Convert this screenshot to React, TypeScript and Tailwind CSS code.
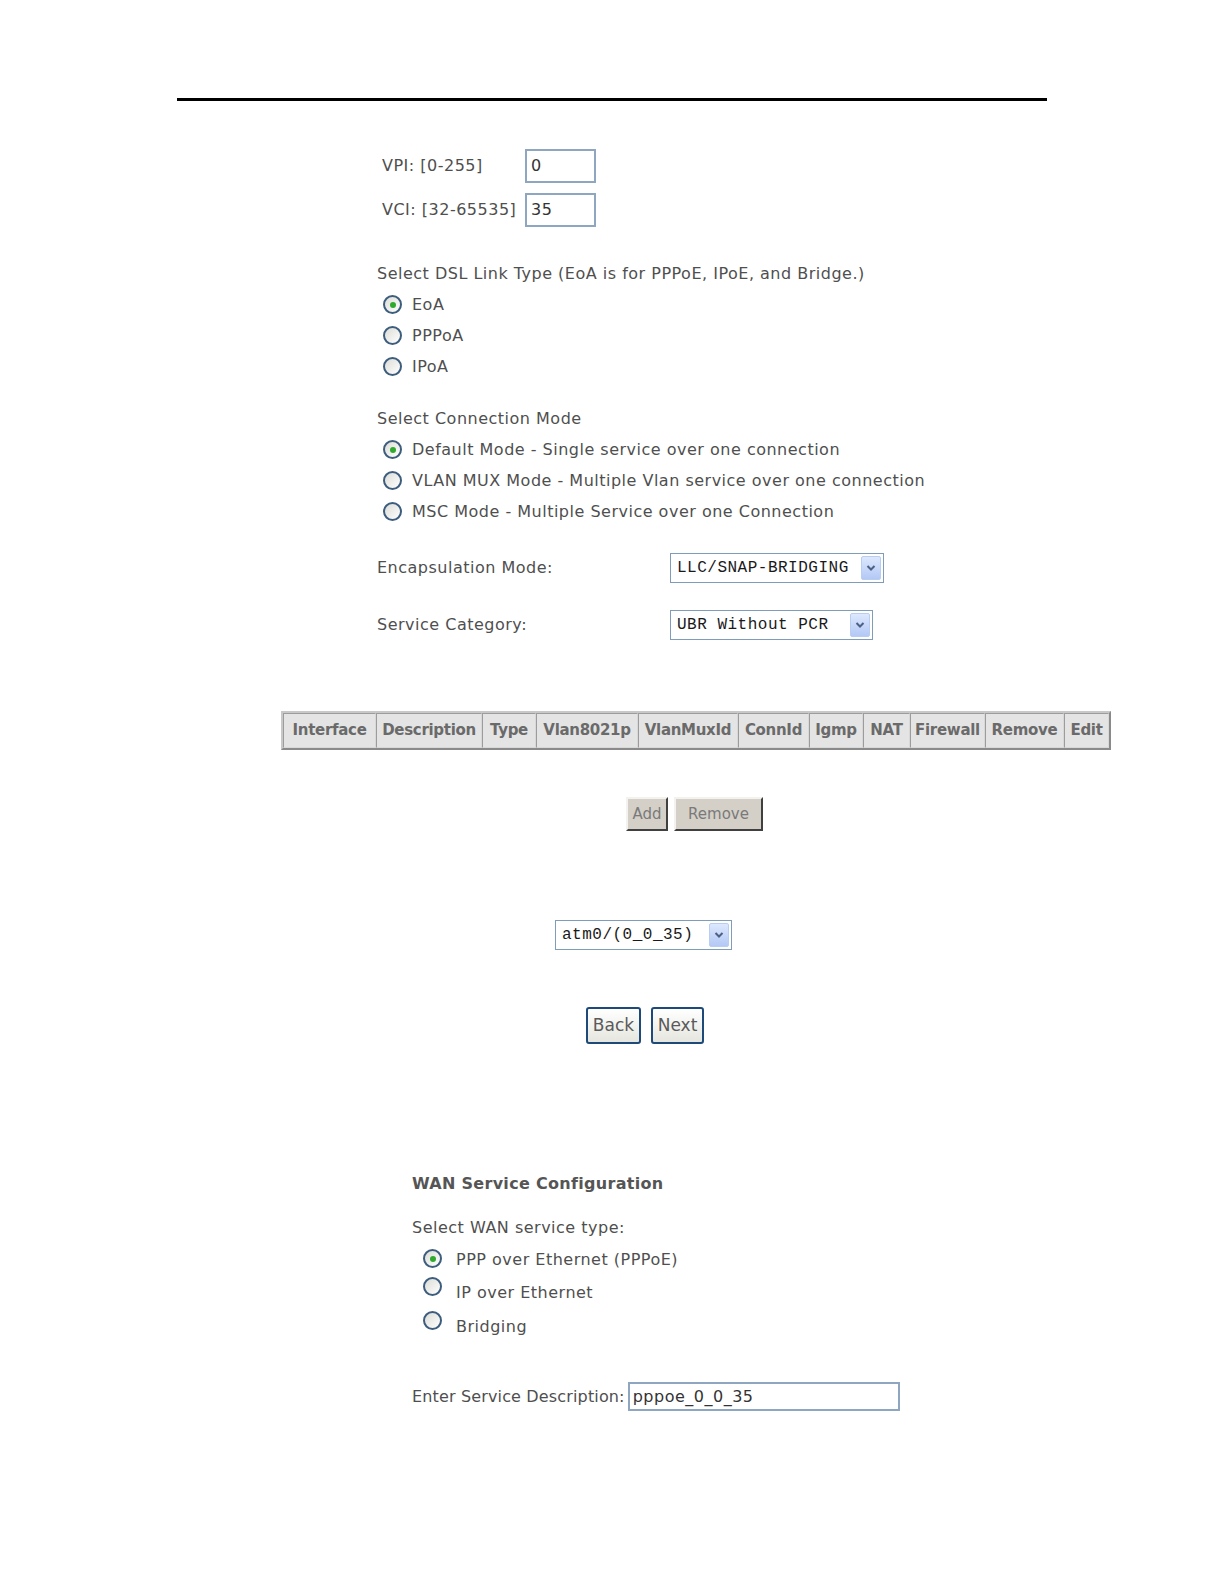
import React from 'react';

const font = "font-['DejaVu_Sans',Verdana,sans-serif]";

const Radio: React.FC<{ checked?: boolean }> = ({ checked }) => (
  <span className="inline-flex items-center justify-center w-[19px] h-[19px] rounded-full border-2 border-[#3d5d7e] bg-gradient-to-br from-[#dcdcd7] to-white shrink-0">
    {checked && <span className="w-[6px] h-[6px] rounded-full bg-[#2faa2f]" />}
  </span>
);

const RadioRow: React.FC<{ checked?: boolean; label: string }> = ({ checked, label }) => (
  <div className="flex items-center h-[31px] pl-[6px] gap-[10px]">
    <Radio checked={checked} />
    <span>{label}</span>
  </div>
);

const SelectBox: React.FC<{ value: string; width: string }> = ({ value, width }) => (
  <div className={`flex items-center justify-between h-[30px] ${width} border border-[#7f9db9] bg-white pl-[6px] pr-[2px]`}>
    <span className="font-['Liberation_Mono',monospace] text-[16px] text-[#1a1a1a] tracking-[0.5px]">{value}</span>
    <span className="flex items-center justify-center w-[20px] h-[24px] rounded-[2px] border border-[#b9cdf3] bg-gradient-to-b from-[#dde8fd] to-[#b3c8f5]">
      <svg width="10" height="8" viewBox="0 0 10 8">
        <path d="M1.5 2 L5 5.5 L8.5 2" fill="none" stroke="#4d6185" strokeWidth="2" />
      </svg>
    </span>
  </div>
);

const columns = [
  { name: 'Interface', w: 'w-[93px]' },
  { name: 'Description', w: 'w-[106px]' },
  { name: 'Type', w: 'w-[54px]' },
  { name: 'Vlan8021p', w: 'w-[102px]' },
  { name: 'VlanMuxId', w: 'w-[100px]' },
  { name: 'ConnId', w: 'w-[71px]' },
  { name: 'Igmp', w: 'w-[54px]' },
  { name: 'NAT', w: 'w-[47px]' },
  { name: 'Firewall', w: 'w-[75px]' },
  { name: 'Remove', w: 'w-[79px]' },
  { name: 'Edit', w: 'w-[45px]' },
];

export default function App() {
  return (
    <div className={`bg-white min-h-[1584px] w-[1224px] text-[16px] tracking-[0.5px] text-[#4f4f4f] ${font}`}>
      <div className="pt-[98px] pl-[177px]">
        <div className="w-[870px] h-[3px] bg-black" />
      </div>

      <div className="pl-[377px] pt-[48px]">
        <div className="flex items-center h-[34px] pl-[5px]">
          <span className="w-[143px]">VPI: [0-255]</span>
          <div className="w-[71px] h-[34px] border-2 border-[#8fa6c1] flex items-center pl-[4px] text-[#333]">0</div>
        </div>
        <div className="flex items-center h-[34px] pl-[5px] mt-[10px]">
          <span className="w-[143px]">VCI: [32-65535]</span>
          <div className="w-[71px] h-[34px] border-2 border-[#8fa6c1] flex items-center pl-[4px] text-[#333]">35</div>
        </div>

        <div className="h-[30px] leading-[30px] mt-[32px]">Select DSL Link Type (EoA is for PPPoE, IPoE, and Bridge.)</div>
        <RadioRow checked label="EoA" />
        <RadioRow label="PPPoA" />
        <RadioRow label="IPoA" />

        <div className="h-[30px] leading-[30px] mt-[22px]">Select Connection Mode</div>
        <RadioRow checked label="Default Mode - Single service over one connection" />
        <RadioRow label="VLAN MUX Mode - Multiple Vlan service over one connection" />
        <RadioRow label="MSC Mode - Multiple Service over one Connection" />

        <div className="flex items-center mt-[26px]">
          <span className="w-[293px]">Encapsulation Mode:</span>
          <SelectBox value="LLC/SNAP-BRIDGING" width="w-[214px]" />
        </div>
        <div className="flex items-center mt-[27px]">
          <span className="w-[293px]">Service Category:</span>
          <SelectBox value="UBR Without PCR" width="w-[203px]" />
        </div>
      </div>

      <div className="pl-[281px] pt-[71px]">
        <div className="inline-flex border-2 border-t-[#c8c8c8] border-l-[#c8c8c8] border-b-[#8a8a8a] border-r-[#8a8a8a] bg-[#e4e4e4]">
          {columns.map((c) => (
            <div
              key={c.name}
              className={`${c.w} h-[35px] flex items-center justify-center border border-t-[#9c9c9c] border-l-[#9c9c9c] border-b-[#d8d8d8] border-r-[#d8d8d8] font-bold text-[#6a6a6a] text-[15px] tracking-[-0.3px]`}
            >
              {c.name}
            </div>
          ))}
        </div>
      </div>

      <div className="flex pl-[626px] pt-[47px] gap-[6px]">
        <button className="w-[42px] h-[34px] bg-[#d4d0c8] border-2 border-t-[#f4f2ee] border-l-[#f4f2ee] border-b-[#404040] border-r-[#404040] text-[#7a7a7a] text-[15px] tracking-normal">Add</button>
        <button className="w-[89px] h-[34px] bg-[#d4d0c8] border-2 border-t-[#f4f2ee] border-l-[#f4f2ee] border-b-[#404040] border-r-[#404040] text-[#7a7a7a] text-[15px] tracking-normal">Remove</button>
      </div>

      <div className="pl-[555px] pt-[89px]">
        <SelectBox value="atm0/(0_0_35)" width="w-[177px]" />
      </div>

      <div className="flex pl-[586px] pt-[57px] gap-[10px]">
        <button className="w-[55px] h-[37px] rounded-[3px] border-2 border-[#1e4a7a] bg-gradient-to-b from-white to-[#e6e6df] text-[#5a5a5a] text-[17px] tracking-normal">Back</button>
        <button className="w-[53px] h-[37px] rounded-[3px] border-2 border-[#1e4a7a] bg-gradient-to-b from-white to-[#e6e6df] text-[#5a5a5a] text-[17px] tracking-normal">Next</button>
      </div>

      <div className="pl-[412px] pt-[125px]">
        <div className="font-bold text-[#555] h-[30px] leading-[30px] tracking-[0.3px]">WAN Service Configuration</div>
        <div className="h-[30px] leading-[30px] mt-[14px]">Select WAN service type:</div>
        <div className="flex items-center h-[33px] pl-[11px] gap-[14px]">
          <span className="-mt-[6px]"><Radio checked /></span>
          <span>PPP over Ethernet (PPPoE)</span>
        </div>
        <div className="flex items-center h-[34px] pl-[11px] gap-[14px]">
          <span className="-mt-[6px]"><Radio /></span>
          <span>IP over Ethernet</span>
        </div>
        <div className="flex items-center h-[34px] pl-[11px] gap-[14px]">
          <span className="-mt-[6px]"><Radio /></span>
          <span>Bridging</span>
        </div>
        <div className="flex items-center mt-[38px]">
          <span className="mr-[3px] tracking-[0.15px]">Enter Service Description:</span>
          <div className="w-[272px] h-[29px] border-2 border-[#8fa6c1] flex items-center pl-[3px] text-[#333]">pppoe_0_0_35</div>
        </div>
      </div>
    </div>
  );
}
